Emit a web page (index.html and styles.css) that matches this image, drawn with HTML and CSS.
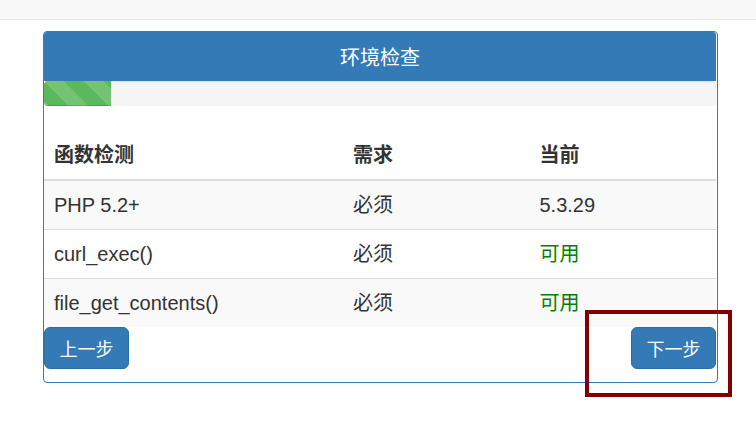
FILE: index.html
```html
<!DOCTYPE html>
<html lang="zh-CN">
<head>
<meta charset="utf-8">
<title>环境检查</title>
<link rel="stylesheet" href="styles.css">
</head>
<body>
<div class="topbar"></div>
<div class="panel">
  <div class="panel-heading">环境检查</div>
  <div class="progress"><div class="progress-bar" style="width:10%"></div></div>
  <table class="checks">
    <thead>
      <tr><th class="col-name">函数检测</th><th class="col-req">需求</th><th class="col-cur">当前</th></tr>
    </thead>
    <tbody>
      <tr class="odd"><td>PHP 5.2+</td><td>必须</td><td>5.3.29</td></tr>
      <tr><td>curl_exec()</td><td>必须</td><td class="ok">可用</td></tr>
      <tr class="odd"><td>file_get_contents()</td><td>必须</td><td class="ok">可用</td></tr>
    </tbody>
  </table>
  <div class="actions">
    <button class="btn">上一步</button>
    <button class="btn">下一步</button>
  </div>
</div>
<div class="highlight"></div>
</body>
</html>
```
FILE: styles.css
```css
html, body {
  margin: 0;
  padding: 0;
  background: #fff;
}
body {
  font-family: "Liberation Sans", "Noto Sans CJK SC", sans-serif;
  color: #333;
  position: relative;
  width: 756px;
  height: 427px;
  overflow: hidden;
}
.topbar {
  height: 19px;
  background: #f8f8f8;
  border-bottom: 1px solid #e7e7e7;
}
.panel {
  box-sizing: border-box;
  width: 675px;
  margin: 11px 0 0 43px;
  border: 1px solid #337ab7;
  border-radius: 4px;
  padding: 0 1px 13px 0;
}
.panel-heading {
  height: 49px;
  line-height: 49px;
  background: #337ab7;
  color: #fff;
  text-align: center;
  font-size: 20px;
  font-family: "Noto Sans CJK SC", sans-serif;
  border-radius: 3px 3px 0 0;
}
.progress {
  height: 25px;
  background: #f5f5f5;
  border-radius: 4px;
  box-shadow: inset 0 1px 2px rgba(0,0,0,.1);
  overflow: hidden;
}
.progress-bar {
  height: 100%;
  background-color: #5cb85c;
  background-image: linear-gradient(45deg, rgba(255,255,255,.15) 25%, transparent 25%, transparent 50%, rgba(255,255,255,.15) 50%, rgba(255,255,255,.15) 75%, transparent 75%, transparent);
  background-size: 40px 40px;
  box-shadow: inset 0 -1px 0 rgba(0,0,0,.15);
}
.checks {
  width: 100%;
  margin-top: 25px;
  border-collapse: collapse;
  table-layout: fixed;
  font-size: 20px;
}
.checks th, .checks td {
  padding: 10px;
  line-height: 28px;
  text-align: left;
  vertical-align: top;
}
.checks th {
  font-weight: bold;
  border-bottom: 2px solid #ddd;
}
.checks td {
  border-top: 1px solid #ddd;
}
.col-name { width: 279px; }
.col-req { width: 166.5px; }
.odd td { background: #f9f9f9; }
.ok { color: #008000; }
.actions {
  display: flex;
  justify-content: space-between;
}
.btn {
  font-family: "Noto Sans CJK SC", sans-serif;
  font-size: 18px;
  line-height: 24px;
  padding: 8px 14.5px;
  color: #fff;
  background: #337ab7;
  border: 1px solid #2e6da4;
  border-radius: 6px;
  cursor: pointer;
}
.highlight {
  position: absolute;
  left: 585px;
  top: 310px;
  width: 147px;
  height: 87px;
  box-sizing: border-box;
  border: 4px solid #800000;
}
```
